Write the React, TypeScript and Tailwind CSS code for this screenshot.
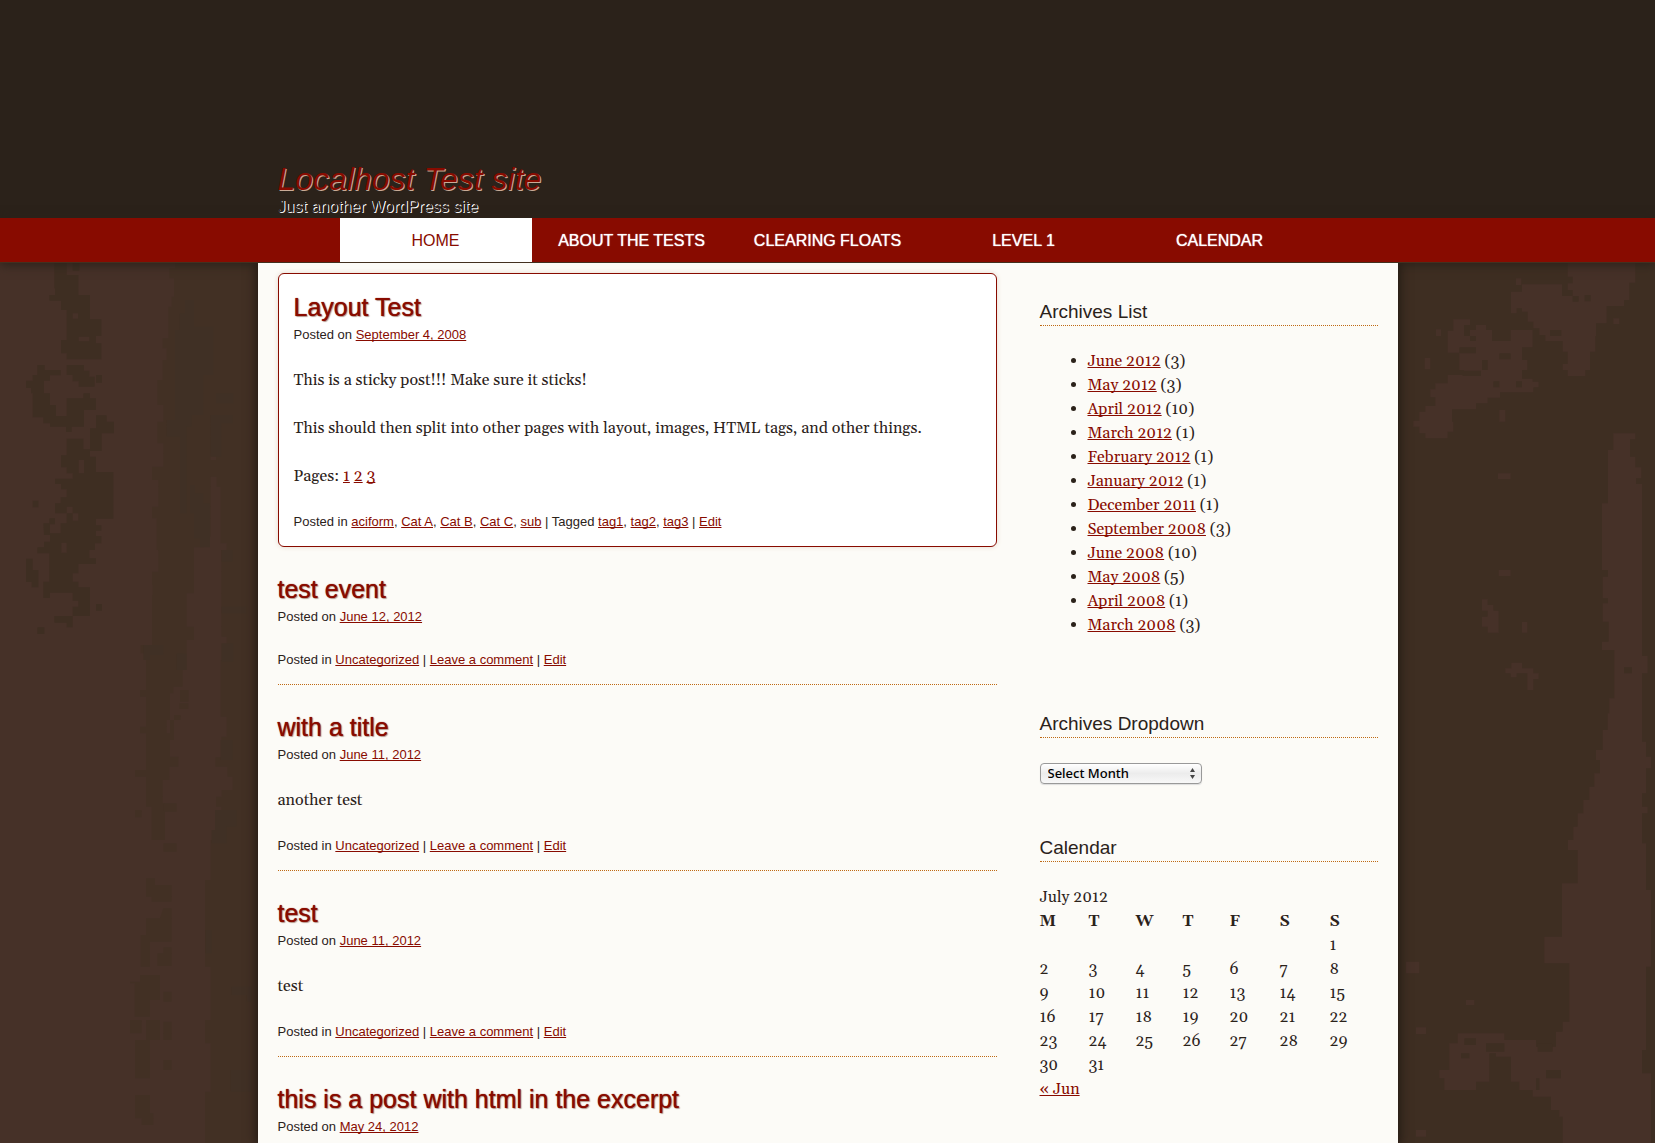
import { Fragment, type ReactNode } from "react";

const linkClass =
  "text-[#880b00] underline underline-offset-1 [text-decoration-skip-ink:none] hover:no-underline";

function TextLink({ children }: { children: ReactNode }) {
  return (
    <a href="#" className={linkClass}>
      {children}
    </a>
  );
}

const navItems = ["Home", "About The Tests", "Clearing Floats", "Level 1", "Calendar"];

const archives: [string, number][] = [
  ["June 2012", 3],
  ["May 2012", 3],
  ["April 2012", 10],
  ["March 2012", 1],
  ["February 2012", 1],
  ["January 2012", 1],
  ["December 2011", 1],
  ["September 2008", 3],
  ["June 2008", 10],
  ["May 2008", 5],
  ["April 2008", 1],
  ["March 2008", 3],
];

const weekdays = [
  { label: "M", name: "Monday", width: "w-[49px]" },
  { label: "T", name: "Tuesday", width: "w-[47px]" },
  { label: "W", name: "Wednesday", width: "w-[47px]" },
  { label: "T", name: "Thursday", width: "w-[47px]" },
  { label: "F", name: "Friday", width: "w-[50px]" },
  { label: "S", name: "Saturday", width: "w-[50px]" },
  { label: "S", name: "Sunday", width: "w-[48px]" },
];

const weeks = Array.from({ length: 6 }, (_, w) =>
  Array.from({ length: 7 }, (_, d) => {
    const day = w * 7 + d - 5;
    return day >= 1 && day <= 31 ? day : null;
  }),
);

/* Weathered wood grain on the left of the page */
function GrainLeft() {
  return (
    <svg
      aria-hidden="true"
      className="absolute top-0 left-0 h-[880px] w-[258px]"
      viewBox="0 9 774 2640"
    >
      <g fill="#3e2e22">
        <path d="M163 9H200V45H235V105H270V178H304V228H288V250H304V298H200V280H183V240H200V150H183V122H148V105H165V85H163ZM218 9H238V32H218ZM218 160V176H234V160ZM236 230V244H268V230Z" />
        <path d="M112 315H134V330H182V346H150V362H132V400H150V435H168V468H200V415H250V400H270V415H288V450H252V500H215V516H198V500H150V490H130V472H98V400H93V384H78V362H98V345H112ZM200 315H252V332H268V350H284V380H236V364H218V345H200ZM288 345H306V368H288Z" />
        <path d="M288 466H320V485H342V520H305V573H270V505H288ZM200 536H250V568H270V590H288V636H340V776H288V796H304V812H288V828H304V850H285V870H268V895H288V912H235V940H218V965H235V982H270V1068H218V1040H235V1022H218V998H150V1014H130V965H148V880H112V862H132V845H150V820H182V790H200V760H165V730H182V712H200V688H183V672H165V656H218V640H200V622H183V586H200ZM252 640V600H236V640ZM218 740H200V760H218V782H235V760H218ZM184 848V878H200V848Z" />
        <path d="M130 790H148V775H165V793H150V825H132ZM98 722H115V742H98ZM78 896H98V930H115V982H95V966H78ZM163 1068H218V1102H200V1088H163ZM112 1102H133V1122H112ZM288 1032H306V1052H288Z" />
      </g>
      <g fill="#423024">
        <path d="M525 9H774V2649H615V2495H632V2350H615V2280H632V2120H615V1860H632V1740H645V1690H664V1640H648V1610H665V1590H698V1550H682V1520H646V1492H664V1430H680V1370H662V1200H680V1130H664V870H680V850H662V680H650V650H632V600H648V580H632V730V830H610V862H582V1000H560V1100H582V1140H560V1180H548V1280H520V1300H510V1440H522V1365H542V1380H500V1420H510V1490H535V1520H508V1560H488V1630H495V1740H455V1640H438V1550H405V1530H438V1420H420V1400H438V1310H420V1290H438V1180H422V1155H456V1005H458V975H456V935H475V870H470V775H456V740H475V660H456V620H490V550H472V485H490V435H472V360H488V300H500V265H488V235H505V140H515V110H522V55H508V25H525Z" />
        <path d="M538 1347H565V1330H538ZM540 1290H566V1325H540ZM405 1650H425V1672H405ZM490 1630H530V1655H490ZM490 1750H530V1775H490ZM438 1855H465V1875H515V1925H455V1910H438ZM490 1945H515V2045H450V2120H422V2025H438V1975H480ZM472 2080H490V2062H515V2118H472ZM390 2165H420V2145H480V2220H450V2270H404V2170H390ZM490 2195H515V2225H490ZM390 2280H425V2320H390ZM438 2280H480V2340H438ZM490 2285H515V2340H490ZM405 2340H450V2455H405ZM490 2400H515V2430H490ZM405 2505H450V2560H460V2595H425V2575H405Z" />
      </g>
      <g fill="#403025">
        <path d="M555 120H582V200H640V345H610V465H575V500H560V760H540V530H500V480H525V210H538V160H555ZM570 675V760H582V835H600V862H630V730H610V700H585V675ZM530 1180H560V1230H530ZM632 465H698V490H664V590H632ZM648 400H700V430H648ZM430 1155H490V1185H450V1200H430Z" />
        <path d="M664 870H698V905H664ZM664 1040H740V1060H664ZM664 1150H700V1205H664ZM662 1440H698V1500H662ZM645 1650H710V1700H680V1750H635V1710H645ZM616 2010H635V2080H616ZM695 2180H755V2225H740V2205H695ZM692 2430H755V2495H692Z" />
      </g>
    </svg>
  );
}

/* Weathered wood grain on the right of the page */
function GrainRight() {
  return (
    <svg
      aria-hidden="true"
      className="absolute top-0 right-0 h-[880px] w-[257px]"
      viewBox="6 9 771 2640"
    >
      <g fill="#463128">
        <path d="M515 9H718V68H700V120H684V138H632V190H600V228H598V275H582V330H568V348H515V330H500V312H515V275H500V243H448V225H430V205H412V185H395V155H378V145H362V160H345V95H378V73H498V108H530V125H548V108H530V90H515V70H530V50H515ZM566 105V124H584V105ZM462 210V228H496V210Z" />
        <path d="M172 178H222V195H204V228H222V243H240V228H222V210H240V195H270V210H288V243H344V210H410V262H378V300H394V330H378V356H410V365H428V382H412V397H312V413H275V430H240V448H168V485H172V515H155V535H88V520H70V500H52V482H70V455H88V438H118V412H103V388H118V370H155V345H200V348H255V332H204V330H190V280H240V262H190V278H155V212H172ZM310 280V298H344V280ZM258 300V330H275V300ZM292 364V382H310V364ZM360 364V382H378V364Z" />
        <path d="M360 55H376V75H360ZM120 208H135V228H120ZM86 294H103V328H86ZM652 175H670V192H652ZM310 450H328V485H310ZM306 640H344V657H306ZM308 930H344V948H308ZM258 1018H275V1035H292V1052H308V1118H275V1100H258V1070H275V1052H258ZM378 1086H394V1118H378ZM328 1225H346V1208H378V1225H412V1240H428V1257H412V1290H394V1240H362V1252H344V1240H328Z" />
        <path d="M652 520H718V538H702V590H718V622H736V655H720V672H738V1188H755V1240H738V1445H750V1490H765V1525H750V1600H738V1640H755V1660H738V1750H750V1890H765V2025H765V2120H750V2370H738V2440H765V2649H500V2570H490V2550H465V2510H410V2490H370V2465H345V2390H300V2380H280V2465H240V2490H145V2455H130V2430H160V2350H185V2320H325V2340H420V2360H480V2315H500V2285H520V2110H445V2030H498V1870H545V1770H516V1740H532V1700H545V1660H562V1620H580V1580H595V1540H612V1500H600V1470H620V1410H635V1360H640V1315H655V1170H618V1145H638V1085H620V1030H636V1015H620V950H636V930H618V730H636V570H652ZM684 1222V1240H708V1222Z" />
        <path d="M30 2105H70V2140H30ZM60 2302H90V2322H60ZM210 2220H235V2235H210ZM60 2610H90V2630H60Z" />
      </g>
      <path
        fill="#3e2e22"
        d="M205 2335H240V2355H205ZM270 2350H325V2375H270ZM425 2350H470V2375H425ZM450 2430H495V2455H430V2490H420V2455H450ZM195 2380H220V2395H195Z"
      />
    </svg>
  );
}

function PostHeader({ title, date }: { title: string; date: string }) {
  return (
    <header className="font-['Helvetica_Neue','Liberation_Sans',sans-serif]">
      <h2 className="text-[25px] leading-[31px] [text-shadow:0_0_1px_#880b00,1px_1px_1px_#b9a79c]">
        <a href="#" className="text-[#880b00]">
          {title}
        </a>
      </h2>
      <p className="text-[13px] leading-6">
        Posted on <TextLink>{date}</TextLink>
      </p>
    </header>
  );
}

function LinkList({ items }: { items: string[] }) {
  return (
    <>
      {items.map((item, i) => (
        <Fragment key={item}>
          {i > 0 && ", "}
          <TextLink>{item}</TextLink>
        </Fragment>
      ))}
    </>
  );
}

function Post({ title, date, body }: { title: string; date: string; body?: string }) {
  return (
    <article className="border-b border-dotted border-[#bf6a14] pt-[27px] pb-3">
      <PostHeader title={title} date={date} />
      {body && <p className="mt-[21px]">{body}</p>}
      <footer
        className={
          body
            ? "mt-[22px] font-['Helvetica_Neue','Liberation_Sans',sans-serif] text-[13px] leading-6"
            : "mt-[19px] font-['Helvetica_Neue','Liberation_Sans',sans-serif] text-[13px] leading-6"
        }
      >
        Posted in <TextLink>Uncategorized</TextLink> | <TextLink>Leave a comment</TextLink> |{" "}
        <TextLink>Edit</TextLink>
      </footer>
    </article>
  );
}

function WidgetTitle({ children }: { children: ReactNode }) {
  return (
    <h3 className="border-b border-dotted border-[#bf6a14] font-['Helvetica_Neue','Liberation_Sans',sans-serif] text-[19px] leading-[26px]">
      {children}
    </h3>
  );
}

export default function App() {
  return (
    <div className="flex min-h-screen flex-col bg-[#2b221a] font-[Gelasio,Georgia,'Liberation_Serif',serif] text-base leading-6 text-[#2b221a]">
      <header className="mx-auto w-full max-w-[1140px] px-5 pt-[161px] pb-px font-['Helvetica_Neue','Liberation_Sans',sans-serif]">
        <h1 className="text-[32px] leading-9 italic [text-shadow:1px_1px_0_#c9ab97]">
          <a href="#" className="text-[#880b00]">
            Localhost Test site
          </a>
        </h1>
        <p className="text-base leading-5 text-[#2b221a] [text-shadow:1px_1px_0_#fff]">
          Just another WordPress site
        </p>
      </header>

      <nav className="relative z-10 border-b border-[#43301f] bg-[#880b00] shadow-[0_2px_10px_#2b221a]">
        <ul className="flex justify-center gap-1 font-['Helvetica_Neue','Liberation_Sans',sans-serif] text-base leading-[42px] uppercase">
          {navItems.map((item, i) => (
            <li key={item} className="w-48">
              <a
                href="#"
                aria-current={i === 0 ? "page" : undefined}
                className={
                  i === 0
                    ? "block bg-white pt-0.5 text-center text-[#880b00]"
                    : "block pt-0.5 text-center text-white [text-shadow:0_0_1px_#fff]"
                }
              >
                {item}
              </a>
            </li>
          ))}
        </ul>
      </nav>

      <div className="relative flex grow justify-center overflow-hidden bg-[linear-gradient(to_right,#463128_50%,#3e2e22_50%)]">
        <GrainLeft />
        <GrainRight />
        <div className="relative z-20 flex w-full max-w-[1140px] gap-[43px] bg-[#fcfbf7] px-5 pt-2.5 shadow-[0_0_10px_2px_#221a13]">
          <main className="min-w-0 flex-1">
            <article className="rounded-md border border-[#880b00] bg-white px-[15px] pt-[18px] pb-3 shadow-[0_0_5px_#e4d8cc]">
              <PostHeader title="Layout Test" date="September 4, 2008" />
              <div className="mt-[21px] space-y-6">
                <p>This is a sticky post!!! Make sure it sticks!</p>
                <p>
                  This should then split into other pages with layout, images, HTML tags, and other
                  things.
                </p>
                <p>
                  Pages: <TextLink>1</TextLink> <TextLink>2</TextLink> <TextLink>3</TextLink>
                </p>
              </div>
              <footer className="mt-[22px] font-['Helvetica_Neue','Liberation_Sans',sans-serif] text-[13px] leading-6">
                Posted in <LinkList items={["aciform", "Cat A", "Cat B", "Cat C", "sub"]} /> | Tagged{" "}
                <LinkList items={["tag1", "tag2", "tag3"]} /> | <TextLink>Edit</TextLink>
              </footer>
            </article>
            <Post title="test event" date="June 12, 2012" />
            <Post title="with a title" date="June 11, 2012" body="another test" />
            <Post title="test" date="June 11, 2012" body="test" />
            <article className="pt-[27px]">
              <PostHeader title="this is a post with html in the excerpt" date="May 24, 2012" />
            </article>
          </main>

          <aside className="w-[338px] shrink-0 pt-[26px]">
            <section>
              <WidgetTitle>Archives List</WidgetTitle>
              <ul className="mt-[23px] list-disc pl-12">
                {archives.map(([month, count]) => (
                  <li key={month}>
                    <TextLink>{month}</TextLink> ({count})
                  </li>
                ))}
              </ul>
            </section>

            <section className="mt-[74px]">
              <WidgetTitle>Archives Dropdown</WidgetTitle>
              <div className="relative mt-[25px] w-[162px]">
                <select
                  aria-label="Archives Dropdown"
                  className="block h-[21px] w-full appearance-none rounded border border-[#999] bg-linear-to-b from-white via-[#ececec] to-[#f8f8f8] pr-6 pl-[7px] font-['Lucida_Grande','Noto_Sans',sans-serif] text-[13px] leading-[19px] font-medium text-black shadow-[0_1px_1px_#ddd]"
                >
                  <option>Select Month</option>
                  {archives.map(([month]) => (
                    <option key={month}>{month}</option>
                  ))}
                </select>
                <svg
                  aria-hidden="true"
                  className="pointer-events-none absolute top-[5px] right-[7px] h-[11px] w-[5px]"
                  viewBox="0 0 5 11"
                  fill="#444"
                >
                  <path d="M2.5 0L5 4H0ZM2.5 11L0 7H5Z" />
                </svg>
              </div>
            </section>

            <section className="mt-[51px]">
              <WidgetTitle>Calendar</WidgetTitle>
              <table className="mt-[23px] w-full table-fixed border-collapse text-left">
                <caption className="text-left">July 2012</caption>
                <thead>
                  <tr>
                    {weekdays.map((day) => (
                      <th key={day.name} scope="col" title={day.name} className={day.width}>
                        {day.label}
                      </th>
                    ))}
                  </tr>
                </thead>
                <tbody>
                  {weeks.map((week, w) => (
                    <tr key={w} className="h-6">
                      {week.map((day, d) => (
                        <td key={d}>{day}</td>
                      ))}
                    </tr>
                  ))}
                </tbody>
                <tfoot>
                  <tr>
                    <td colSpan={7}>
                      <TextLink>« Jun</TextLink>
                    </td>
                  </tr>
                </tfoot>
              </table>
            </section>
          </aside>
        </div>
      </div>
    </div>
  );
}
